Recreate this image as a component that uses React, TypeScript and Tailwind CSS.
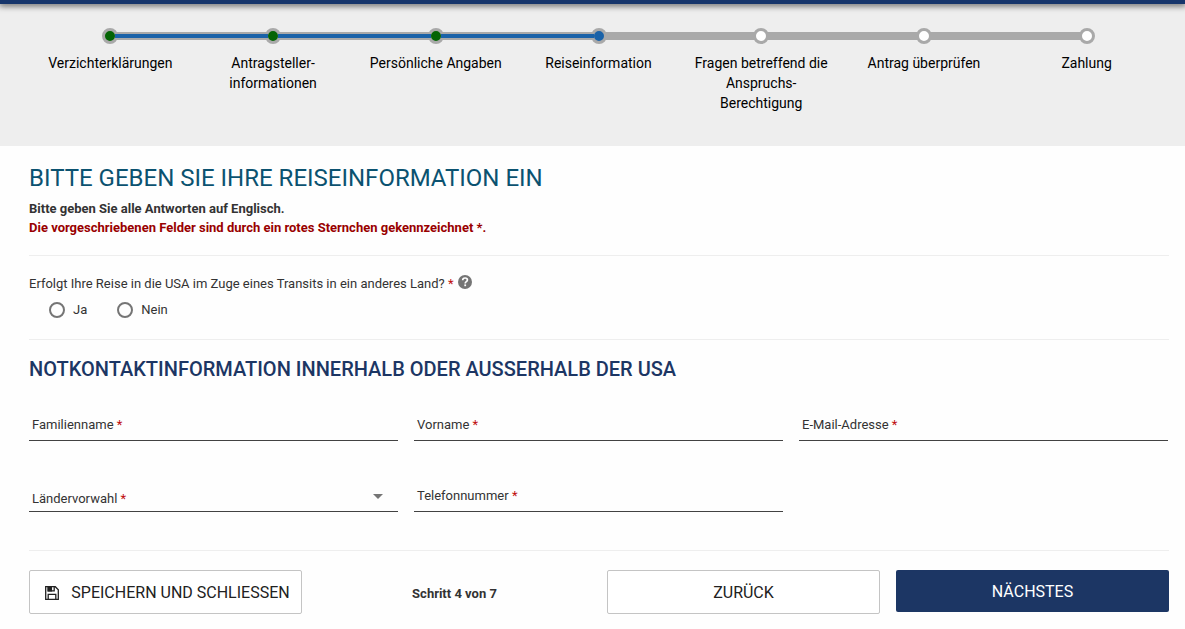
import { useState } from 'react';
import type { ReactNode } from 'react';

type StepState = 'done' | 'current' | 'open';

const steps: { lines: string[]; state: StepState }[] = [
  { lines: ['Verzichterklärungen'], state: 'done' },
  { lines: ['Antragsteller-', 'informationen'], state: 'done' },
  { lines: ['Persönliche Angaben'], state: 'done' },
  { lines: ['Reiseinformation'], state: 'current' },
  { lines: ['Fragen betreffend die', 'Anspruchs-', 'Berechtigung'], state: 'open' },
  { lines: ['Antrag überprüfen'], state: 'open' },
  { lines: ['Zahlung'], state: 'open' },
];

const dotColor: Record<StepState, string> = {
  done: 'bg-[#046404]',
  current: 'bg-[#1a62a8]',
  open: 'bg-white',
};

function Segment({ kind, side }: { kind: 'none' | 'filled' | 'empty'; side: 'left' | 'right' }) {
  const color =
    kind === 'none'
      ? 'border-transparent'
      : kind === 'filled'
        ? 'border-[#a9a9a9] bg-[#1a62a8]'
        : 'border-[#a9a9a9] bg-[#a9a9a9]';
  return <span className={`z-10 h-2 flex-1 border-y-2 ${side === 'left' ? '-mr-[3px]' : '-ml-[3px]'} ${color}`} />;
}

function Stepper() {
  return (
    <ol className="grid grid-cols-7 text-center text-sm leading-5 text-black">
      {steps.map((step, i) => (
        <li key={step.lines[0]} aria-current={step.state === 'current' ? 'step' : undefined}>
          <div className="mb-[9px] flex items-center">
            <Segment side="left" kind={i === 0 ? 'none' : step.state === 'open' ? 'empty' : 'filled'} />
            <span className={`size-4 rounded-full border-3 border-[#a9a9a9] ${dotColor[step.state]}`} />
            <Segment
              side="right"
              kind={i === steps.length - 1 ? 'none' : step.state === 'done' ? 'filled' : 'empty'}
            />
          </div>
          {step.lines.map((line) => (
            <span key={line} className="block">
              {line}
            </span>
          ))}
        </li>
      ))}
    </ol>
  );
}

function Star() {
  return <span className="text-[#c00d0d]">*</span>;
}

function TextField({ id, label, type = 'text' }: { id: string; label: string; type?: string }) {
  return (
    <div className="grid border-b border-[#424242]">
      <input
        id={id}
        type={type}
        required
        placeholder=" "
        className="peer col-start-1 row-start-1 h-8 w-full bg-transparent px-[3px] outline-none"
      />
      <label
        htmlFor={id}
        className="pointer-events-none col-start-1 row-start-1 px-[3px] pt-[7px] peer-focus:invisible peer-[:not(:placeholder-shown)]:invisible"
      >
        {label} <Star />
      </label>
    </div>
  );
}

function SelectField({ id, label }: { id: string; label: string }) {
  const [value, setValue] = useState('');
  return (
    <div className="grid border-b border-[#424242]">
      <select
        id={id}
        required
        value={value}
        onChange={(e) => setValue(e.target.value)}
        className="col-start-1 row-start-1 h-8 w-full appearance-none bg-transparent px-[3px] outline-none"
      >
        <option value="" aria-label={label} />
        <option value="49">+49</option>
        <option value="43">+43</option>
        <option value="41">+41</option>
      </select>
      <div className="pointer-events-none col-start-1 row-start-1 flex items-start justify-between pr-[15px] pl-[3px]">
        <label htmlFor={id} className={`pt-[10px] ${value ? 'invisible' : ''}`}>
          {label} <Star />
        </label>
        <svg viewBox="0 0 10 5" className="mt-[15px] h-[5px] w-[10px] fill-[#757575]" aria-hidden="true">
          <path d="M0 0h10L5 5z" />
        </svg>
      </div>
    </div>
  );
}

function Radio({ value, children }: { value: string; children: ReactNode }) {
  return (
    <label className="flex items-center gap-2">
      <input
        type="radio"
        name="transit"
        value={value}
        className="size-4 appearance-none rounded-full border-2 border-[#757575] checked:border-5 checked:border-[#1c3664]"
      />
      {children}
    </label>
  );
}

const outlineButton =
  'flex h-11 items-center justify-center rounded-xs border border-[#c4c4c4] bg-white pt-px text-base text-[#212121]';

export default function App() {
  return (
    <div className="min-h-screen bg-[#fefefe] font-[Roboto,sans-serif] text-[13px] leading-[19px] text-[#333]">
      <div className="relative h-1 bg-[#16356b] shadow-[0_1px_6px_1px_rgba(0,0,0,0.6)]" />
      <header className="bg-[#eeeeee] pt-6 pr-[17px] pb-[33px] pl-[29px]">
        <Stepper />
      </header>

      <main className="pt-4 pr-4 pl-[29px]">
        <h1 className="mb-[5px] text-2xl text-[#0b5270]">BITTE GEBEN SIE IHRE REISEINFORMATION EIN</h1>
        <p className="font-bold">Bitte geben Sie alle Antworten auf Englisch.</p>
        <p className="font-bold text-[#990000]">
          Die vorgeschriebenen Felder sind durch ein rotes Sternchen gekennzeichnet *.
        </p>

        <div
          role="radiogroup"
          aria-labelledby="transit-frage"
          className="mt-[18px] border-t border-[#eeeeee] pt-[18px]"
        >
          <div className="flex items-start gap-1">
            <span id="transit-frage">
              Erfolgt Ihre Reise in die USA im Zuge eines Transits in ein anderes Land? <Star />
            </span>
            <button type="button" aria-label="Hilfe" className="pt-px">
              <svg viewBox="0 0 14 14" className="size-[14px]" aria-hidden="true">
                <circle cx="7" cy="7" r="7" fill="#757575" />
                <path d="M4.7 5.3c0-1.5 1-2.3 2.4-2.3s2.3.8 2.3 2c0 1.6-2.2 1.7-2.2 3.4" fill="none" stroke="#fff" strokeWidth="1.7" />
                <path d="M6.3 9.4h1.8v1.8H6.3z" fill="#fff" />
              </svg>
            </button>
          </div>
          <div className="mt-[7px] flex gap-[30px] pl-5">
            <Radio value="ja">Ja</Radio>
            <Radio value="nein">Nein</Radio>
          </div>
        </div>

        <section className="mt-5 border-t border-[#eeeeee] pt-[15px]">
          <h2 className="text-xl leading-7 font-medium text-[#1c3664]">
            NOTKONTAKTINFORMATION INNERHALB ODER AUSSERHALB DER USA
          </h2>
          <div className="mt-[25px] grid grid-cols-3 gap-x-4 gap-y-[38px] pr-px">
            <TextField id="familienname" label="Familienname" />
            <TextField id="vorname" label="Vorname" />
            <TextField id="email" label="E-Mail-Adresse" type="email" />
            <SelectField id="vorwahl" label="Ländervorwahl" />
            <TextField id="telefon" label="Telefonnummer" type="tel" />
          </div>
        </section>

        <footer className="mt-[38px] grid grid-cols-4 gap-4 border-t border-[#eeeeee] pt-[19px] pb-4">
          <button type="button" className={`${outlineButton} gap-3 pl-1`}>
            <svg viewBox="0 0 14 14" className="size-[14px]" fill="none" stroke="#212121" strokeWidth="1.3" aria-hidden="true">
              <path d="M.7.7h9.6l3 3v9.6H.7z" />
              <path d="M3.2 13V8.4h7.6V13" />
              <path d="M3.2.7v4.2h6V.7" />
              <path d="M3.2.7h3.2v4.2H3.2z" fill="#212121" />
            </svg>
            SPEICHERN UND SCHLIESSEN
          </button>
          <p className="self-center pt-[3px] text-center font-bold">Schritt 4 von 7</p>
          <button type="button" className={outlineButton}>
            ZURÜCK
          </button>
          <button type="button" className="h-[42px] rounded-xs bg-[#1c3664] pt-px text-base text-white">
            NÄCHSTES
          </button>
        </footer>
      </main>
    </div>
  );
}
